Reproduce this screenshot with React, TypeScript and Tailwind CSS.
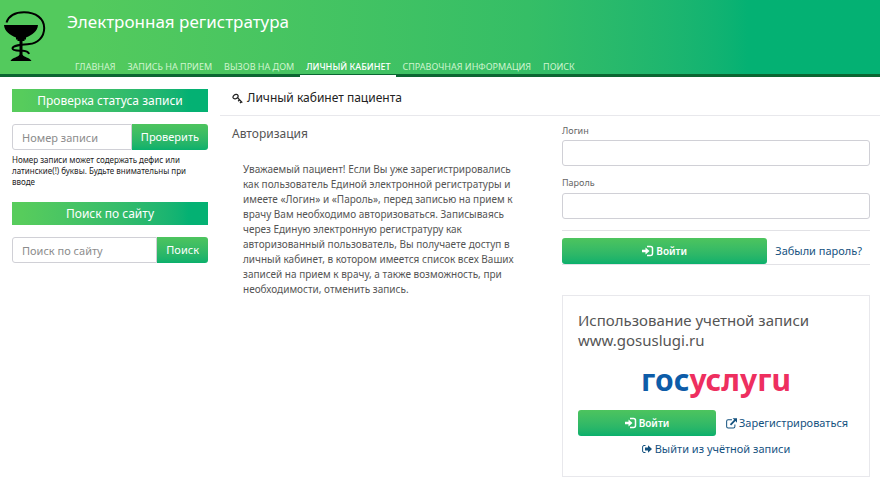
import React from "react";

const menu = [
  { title: "Главная" },
  { title: "Запись на прием" },
  { title: "Вызов на дом" },
  { title: "Личный кабинет", active: true },
  { title: "Справочная информация" },
  { title: "Поиск" },
];

const Logo: React.FC = () => (
  <svg viewBox="0 0 42 50" className="h-[50px] w-[42px]" aria-hidden="true">
    <path
      d="M2.500 11.500C5 4.500 12 1.300 20 1.300c12 0 20.200 6.400 20.200 15.700 0 9.500-7 15.500-15 16-6 .500-16.700 1-16.700 4.500 0 2.700 6 2 10.500 2.200 4 .300 5.500 1 6 3.300"
      fill="none"
      stroke="#000"
      strokeWidth="2"
    />
    <path d="M0 14h34c-.500 6-5.500 10-12 12.500v2h-1.500v1.500h-2v13.500c1 3 7 2.500 9 6.500H6.500c2-4 8-3.500 9-6.500V30h-2v-1.500h-1.500v-2C5.500 24 .500 20 0 14Z" />
  </svg>
);

const KeyIcon: React.FC = () => (
  <svg viewBox="0 0 12 12" className="h-[11px] w-[11px]" fill="none" stroke="currentColor" aria-hidden="true">
    <path d="M1.200 5.200C.600 3.500 3 1.200 4.800 1.500c2 .300 2.400 2.200 1.200 3.600S2 7 1.200 5.200Z" strokeWidth="1.400" />
    <path d="M5.800 4.800 11.200 10.500M8 7.500 6.800 9M10 9.300 8.800 11" strokeWidth="1.500" />
  </svg>
);

const LoginIcon: React.FC = () => (
  <svg viewBox="0 0 12 12" className="h-3 w-3" aria-hidden="true">
    <path d="M5 1.500h3.500q2 0 2 2v5q0 2-2 2H5" fill="none" stroke="currentColor" strokeWidth="1.500" />
    <path d="M0 4.800h3.500V2.500L7.500 6 3.500 9.500V7.200H0Z" fill="currentColor" />
  </svg>
);

const LogoutIcon: React.FC = () => (
  <svg viewBox="0 0 10 10" className="h-[10px] w-[10px]" aria-hidden="true">
    <path d="M3.500 1.500H2Q.600 1.500.600 3v4q0 1.500 1.400 1.500h1.500" fill="none" stroke="currentColor" strokeWidth="1" />
    <path d="M3 3.500h3V1.300L10 5 6 8.700V6.500H3Z" fill="currentColor" />
  </svg>
);

const ExternalIcon: React.FC = () => (
  <svg viewBox="0 0 12 12" className="h-[11px] w-[11px]" aria-hidden="true">
    <path d="M6.500 2H2.300Q.700 2 .700 3.600v5.800Q.700 11 2.300 11h5.800q1.600 0 1.600-1.600V7" fill="none" stroke="currentColor" strokeWidth="1.100" />
    <path d="M7.200.300H12v4.800l-1.700-1.700-4.700 4.700-1.400-1.400 4.700-4.700Z" fill="currentColor" />
  </svg>
);

type SideFormProps = {
  id: string;
  title: string;
  placeholder: string;
  button: string;
  hint?: string;
};

const SideForm: React.FC<SideFormProps> = ({ id, title, placeholder, button, hint }) => (
  <form onSubmit={(e) => e.preventDefault()}>
    <h2 className="bg-linear-to-r from-[#57cc5c] from-5% to-[#04b173] to-90% text-center text-xs leading-[23px] text-white">
      {title}
    </h2>
    <div className="mt-3 flex">
      <input
        id={id}
        aria-label={title}
        placeholder={placeholder}
        className="h-[26px] min-w-0 flex-1 rounded-l-[3px] border border-[#d0d0d6] px-[9px] text-[11px] placeholder:text-[#8c8c8c]"
      />
      <button className="h-[26px] rounded-r-[3px] bg-linear-to-b from-[#4dc45e] to-[#08b06c] px-[9px] text-[11px] text-white">
        {button}
      </button>
    </div>
    {hint && <p className="mt-1 pr-3 text-[8px] leading-[11px] text-[#222]">{hint}</p>}
  </form>
);

const Header: React.FC = () => (
  <header className="flex h-[77px] border-b-3 border-[#0b6632] bg-linear-to-r from-[#53ca5d] from-10% via-[#35be66] via-60% to-[#04b173] to-85%">
    <a href="#" className="ml-1 mt-[11px]" aria-label="На главную">
      <Logo />
    </a>
    <div className="ml-[21px] flex flex-col justify-between">
      <h1 className="mt-2 text-[17px] leading-7 text-white">Электронная регистратура</h1>
      <nav className="-mb-[3px] flex pl-[2px] text-[9px] leading-4 uppercase text-[#d0f5cf]">
        {menu.map((item) => (
          <a
            key={item.title}
            href="#"
            className={
              item.active
                ? "border-b-2 border-white px-1.5 font-medium text-white"
                : "border-b-2 border-transparent px-1.5"
            }
          >
            {item.title}
          </a>
        ))}
      </nav>
    </div>
  </header>
);

const submitClass =
  "flex h-[26px] items-center justify-center gap-[2px] rounded-[3px] bg-linear-to-b from-[#4dc45e] to-[#08b06c] text-[10px] font-semibold text-white";

const LoginForm: React.FC = () => (
  <form onSubmit={(e) => e.preventDefault()}>
    <label htmlFor="login" className="block text-[9px] leading-[14px] text-[#666]">
      Логин
    </label>
    <input id="login" className="mt-[2px] h-[26px] w-full rounded-[3px] border border-[#d0d0d6] px-2 text-xs" />
    <label htmlFor="password" className="mt-[10px] block text-[9px] leading-[14px] text-[#666]">
      Пароль
    </label>
    <input
      id="password"
      type="password"
      className="mt-[3px] h-[26px] w-full rounded-[3px] border border-[#d0d0d6] px-2 text-xs"
    />
    <div className="mt-[11px] border-t border-[#e2e2e6] pt-[7px]">
      <div className="flex border-b border-[#e2e2e6]">
        <button className={`${submitClass} w-2/3`}>
          <LoginIcon />
          Войти
        </button>
        <a href="#" className="flex-1 text-center text-[11px] leading-[26px] text-[#14527f]">
          Забыли пароль?
        </a>
      </div>
    </div>
  </form>
);

const Gosuslugi: React.FC = () => (
  <section className="mt-[30px] border border-[#e8e8ec] px-[15px] pt-[14px] pb-[14px]">
    <h3 className="text-[15px] leading-5 text-[#555]">
      Использование учетной записи www.gosuslugi.ru
    </h3>
    <p className="mt-[14px] text-center text-[30px] leading-[32px] font-bold text-[#ee2f5f]">
      <span className="text-[#0d5ca8]">гос</span>услугu
    </p>
    <div className="mt-[14px] flex items-center gap-[10px]">
      <button className={`${submitClass} w-1/2`}>
        <LoginIcon />
        Войти
      </button>
      <a href="#" className="flex items-center gap-[2px] text-[11px] leading-[26px] text-[#14527f]">
        <ExternalIcon />
        Зарегистрироваться
      </a>
    </div>
    <a href="#" className="flex items-center justify-center gap-[3px] text-[11px] leading-[26px] text-[#14527f]">
      <LogoutIcon />
      Выйти из учётной записи
    </a>
  </section>
);

export default function App() {
  return (
    <div className="min-h-screen bg-white font-['Noto_Sans',sans-serif]">
      <Header />
      <div className="grid grid-cols-4">
        <aside className="flex flex-col gap-[15px] px-3 pt-3">
          <SideForm
            id="number"
            title="Проверка статуса записи"
            placeholder="Номер записи"
            button="Проверить"
            hint="Номер записи может содержать дефис или латинские(!) буквы. Будьте внимательны при вводе"
          />
          <SideForm id="search" title="Поиск по сайту" placeholder="Поиск по сайту" button="Поиск" />
        </aside>
        <main className="col-span-3">
          <h2 className="flex h-[39px] items-center gap-1 border-b border-[#e8e8ec] px-3 pt-1 text-xs text-[#222]">
            <KeyIcon />
            Личный кабинет пациента
          </h2>
          <div className="grid grid-cols-2">
            <div className="px-3 pt-2">
              <h3 className="text-xs leading-5 text-[#555]">Авторизация</h3>
              <p className="mt-[18px] pr-4 pl-[11px] text-[10px] leading-[15px] text-[#555]">
                Уважаемый пациент! Если Вы уже зарегистрировались как пользователь Единой электронной
                регистратуры и имеете «Логин» и «Пароль», перед записью на прием к врачу Вам необходимо
                авторизоваться. Записываясь через Единую электронную регистратуру как авторизованный
                пользователь, Вы получаете доступ в личный кабинет, в котором имеется список всех Ваших
                записей на прием к врачу, а также возможность, при необходимости, отменить запись.
              </p>
            </div>
            <div className="pt-2 pr-[10px] pl-3">
              <LoginForm />
              <Gosuslugi />
            </div>
          </div>
        </main>
      </div>
    </div>
  );
}
